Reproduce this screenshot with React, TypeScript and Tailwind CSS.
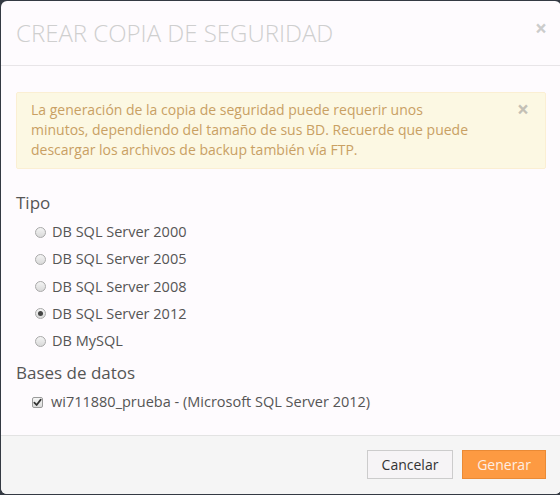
import React from "react";

function Radio({ checked }: { checked?: boolean }) {
  return (
    <span className="relative inline-flex h-[11px] w-[11px] shrink-0 items-center justify-center rounded-full border border-[#a9a9a9] bg-gradient-to-b from-[#f4f4f4] to-[#d9d9d9]">
      {checked && <span className="h-[5px] w-[5px] rounded-full bg-[#444]" />}
    </span>
  );
}

function Checkbox() {
  return (
    <span className="relative inline-flex h-[11px] w-[11px] shrink-0 items-center justify-center rounded-[2px] border border-[#9a9a9a] bg-gradient-to-b from-[#f6f6f6] to-[#dcdcdc]">
      <svg viewBox="0 0 10 10" className="h-[9px] w-[9px]">
        <path d="M1.5 5.2 L4 7.8 L8.6 1.8" fill="none" stroke="#333" strokeWidth="1.9" strokeLinecap="round" strokeLinejoin="round" />
      </svg>
    </span>
  );
}

export default function App() {
  const options = [
    "DB SQL Server 2000",
    "DB SQL Server 2005",
    "DB SQL Server 2008",
    "DB SQL Server 2012",
    "DB MySQL",
  ];
  return (
    <div
      className="h-[495px] w-[560px] overflow-hidden bg-[#343a43] pt-px pl-px"
      style={{ fontFamily: '"Open Sans", "Noto Sans", sans-serif' }}
    >
      <div className="w-[560px] overflow-hidden rounded-[6px] bg-[#fefbfe]">
        {/* Header */}
        <div className="flex items-start justify-between border-b border-[#e8e5e8] px-[15px] py-[15px]">
          <h4 className="text-[24px] font-light leading-[34px] text-[#cfcfcf]">CREAR COPIA DE SEGURIDAD</h4>
          <span className="mr-[-1px] mt-[2px] text-[21px] font-bold leading-[21px] text-[#cccccc]">×</span>
        </div>
        {/* Body */}
        <div className="px-[15px] pt-[26px] pb-[23px] text-[14px] leading-[20px] text-[#555]">
          <div className="relative rounded-[2px] border border-[#fbefd3] bg-[#fcf8e3] pt-[7px] pb-[8px] pl-[14px] pr-[35px] text-[#c9a063]">
            La generación de la copia de seguridad puede requerir unos
            <br />
            minutos, dependiendo del tamaño de sus BD. Recuerde que puede
            <br />
            descargar los archivos de backup también vía FTP.
            <span className="absolute right-[16px] top-[6px] text-[21px] font-bold leading-[21px] text-[#c4c0b5]">×</span>
          </div>
          <div className="mt-[22px] text-[17px] leading-[24px] text-[#555]">Tipo</div>
          <div className="mt-[7px] flex flex-col gap-[7.25px]">
            {options.map((o, i) => (
              <div key={o} className="ml-[19px] flex items-center gap-[6px] text-[14.5px] leading-[20px]">
                <Radio checked={i === 3} />
                <span>{o}</span>
              </div>
            ))}
          </div>
          <div className="mt-[10px] text-[17px] leading-[24px] text-[#555]">Bases de datos</div>
          <div className="ml-[16px] mt-[7px] flex items-center gap-[8px] text-[14.5px] leading-[20px]">
            <Checkbox />
            <span>wi711880_prueba - (Microsoft SQL Server 2012)</span>
          </div>
        </div>
        {/* Footer */}
        <div className="flex justify-end gap-[9px] border-t border-[#e3e3e3] bg-[#f5f5f5] px-[15px] pt-[14px] pb-[15px]">
          <button className="h-[29px] w-[86px] border border-[#cccccc] bg-[#f6f4f6] text-[14px] text-[#333]">Cancelar</button>
          <button className="h-[29px] w-[84px] border border-[#ea8a35] bg-[#fd9a42] text-[14px] text-[#fdeee4]">Generar</button>
        </div>
      </div>
    </div>
  );
}
